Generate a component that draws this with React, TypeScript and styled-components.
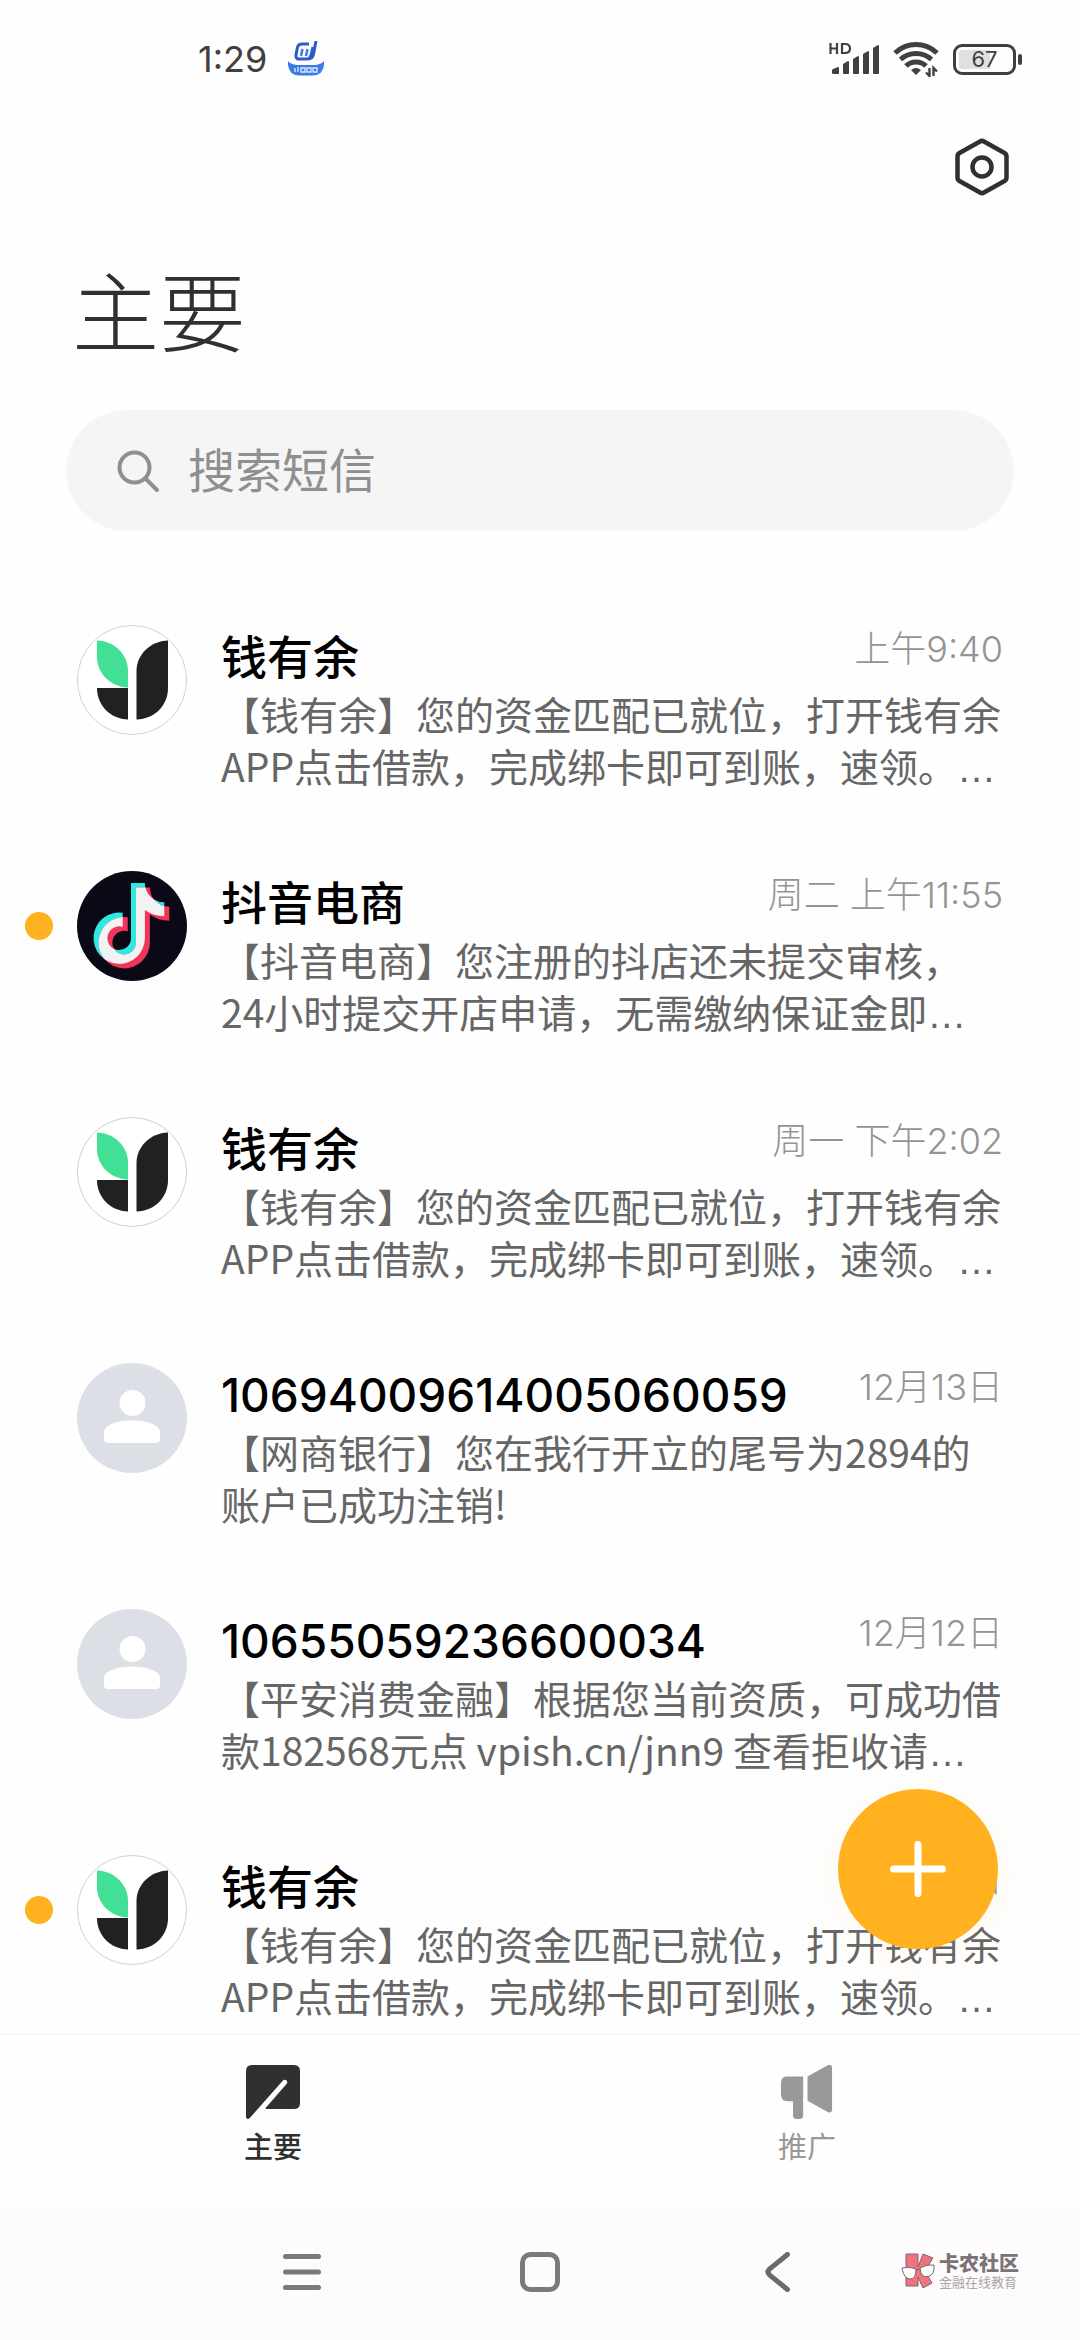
import React from "react";
import styled, { createGlobalStyle } from "styled-components";

const cjk = `"Noto Sans CJK SC", "Noto Sans", sans-serif`;
const mixed = `Inter, "Noto Sans CJK SC", sans-serif`;

const GlobalStyle = createGlobalStyle`
  *, *::before, *::after { box-sizing: border-box; }
  body {
    margin: 0;
    background: #fefefe;
    font-family: ${cjk};
    text-spacing-trim: space-all;
  }
  svg { display: block; }
`;

const Screen = styled.div`
  position: relative;
  display: flex;
  flex-direction: column;
  height: 100vh;
  overflow: hidden;
`;

const StatusBar = styled.div`
  display: flex;
  align-items: center;
  justify-content: space-between;
  height: 118px;
  padding: 0 58px 0 198px;
  color: #404040;
`;

const StatusGroup = styled.div<{ $gap: number }>`
  display: flex;
  align-items: center;
  gap: ${(p) => p.$gap}px;
`;

const Clock = styled.time`
  font: 400 36px/48px ${mixed};
`;

const Toolbar = styled.div`
  display: flex;
  justify-content: flex-end;
  height: 110px;
  padding: 18px 67px 0;
`;

const IconButton = styled.button`
  display: grid;
  place-items: center;
  width: 62px;
  height: 62px;
  padding: 0;
  border: 0;
  background: none;
  color: #303030;
`;

const PageTitle = styled.h1`
  margin: 0;
  padding: 20px 72px 0;
  color: #303030;
  font-size: 87px;
  font-weight: 300;
  line-height: 120px;
`;

const SearchBox = styled.label`
  display: flex;
  align-items: center;
  gap: 28px;
  height: 121px;
  margin: 42px 66px 70px;
  padding: 0 50px;
  border-radius: 61px;
  background: #f5f5f5;
  color: #8f8f8f;
  flex-shrink: 0;
`;

const SearchInput = styled.input`
  flex: 1;
  min-width: 0;
  padding: 0 0 6px;
  border: 0;
  outline: 0;
  background: none;
  color: #303030;
  font: 400 47px/64px ${cjk};
  &::placeholder { color: #8f8f8f; opacity: 1; }
`;

const List = styled.ul`
  flex: 1;
  min-height: 0;
  margin: 0;
  padding: 0;
  overflow: hidden;
  list-style: none;
`;

const Conversation = styled.a`
  display: flex;
  align-items: flex-start;
  height: 246px;
  padding: 24px 77px 0 25px;
  color: inherit;
  text-decoration: none;
`;

const UnreadSlot = styled.span<{ $unread: boolean }>`
  flex: none;
  width: 28px;
  height: 28px;
  margin: 41px 24px 0 0;
  border-radius: 50%;
  background: ${(p) => (p.$unread ? "#ffb11f" : "transparent")};
`;

const Avatar = styled.span`
  flex: none;
  width: 110px;
  height: 110px;
  margin-right: 34px;
`;

const Details = styled.div`
  flex: 1;
  min-width: 0;
`;

const Heading = styled.div`
  display: flex;
  justify-content: space-between;
  align-items: flex-start;
  height: 62px;
`;

const Sender = styled.h2`
  margin: 0;
  color: #000;
  font: 500 46px/64px ${mixed};
`;

const When = styled.time`
  color: #949494;
  font: 300 36px/48px ${mixed};
`;

const Preview = styled.p`
  margin: 0;
  color: #666;
  font-size: 39px;
  line-height: 52px;
  white-space: nowrap;
`;

const Line = styled.span`
  display: block;
`;

const Ellipsis = styled.span`
  font-family: "Liberation Sans", Arial, sans-serif;
`;

const Bottom = styled.div`
  position: relative;
  flex: none;
`;

const Compose = styled.button`
  position: absolute;
  right: 82px;
  bottom: calc(100% + 84px);
  display: grid;
  place-items: center;
  width: 160px;
  height: 160px;
  padding: 0;
  border: 0;
  border-radius: 50%;
  background: #ffb11f;
  box-shadow: 0 8px 60px rgba(255, 177, 31, 0.06);
`;

const Tabs = styled.nav`
  display: flex;
  height: 177px;
  padding: 0 6px;
  border-top: 2px solid #f9f9f9;
  background: #fefefe;
`;

const Tab = styled.button<{ $active?: boolean }>`
  flex: 1;
  display: flex;
  flex-direction: column;
  align-items: center;
  gap: 6px;
  padding: 30px 0 0;
  border: 0;
  background: none;
  color: ${(p) => (p.$active ? "#303030" : "#999")};
  font: ${(p) => (p.$active ? 500 : 400)} 29px/40px ${cjk};
`;

const SystemBar = styled.div`
  display: flex;
  justify-content: center;
  align-items: center;
  gap: 176px;
  height: 130px;
  padding-bottom: 6px;
  background: #fdfbfc;
`;

const Watermark = styled.div`
  position: absolute;
  right: 61px;
  bottom: 50px;
  display: flex;
  align-items: center;
  gap: 4px;
`;

const WatermarkText = styled.div`
  display: flex;
  flex-direction: column;
`;

const WatermarkName = styled.strong`
  color: #7b7376;
  font: 900 20px/22px ${cjk};
`;

const WatermarkTag = styled.span`
  color: #a9a3a5;
  font: 400 13px/16px ${cjk};
`;

const LeafLogo = () => (
  <svg width="110" height="110" viewBox="0 0 110 110">
    <circle cx="55" cy="55" r="54.5" fill="#fff" stroke="#d0d0d0" />
    <path d="M20 15.5C38 16 51 30 51 46V62.500C33 62 20 48 20 32Z" fill="#42e095" />
    <path d="M20 63H51V94.500C33 94 20 80 20 63Z" fill="#212121" />
    <path d="M91 15.500V63C91 80 78 94 59.500 94.500V46C59.500 30 73 16 91 15.500Z" fill="#212121" />
  </svg>
);

const notePath =
  "M448,209.91a210.06,210.06,0,0,1-122.77-39.25V349.38A162.55,162.55,0,1,1,185,188.31V278.2a74.62,74.62,0,1,0,52.23,71.18V0l88,0a121.18,121.18,0,0,0,1.86,22.17h0A122.18,122.18,0,0,0,381,102.39a121.43,121.43,0,0,0,67,20.14Z";

const NoteLogo = () => (
  <svg width="110" height="110" viewBox="0 0 110 110">
    <defs>
      <clipPath id="note-clip">
        <path d={notePath} transform="translate(16.500 12) scale(.158)" />
      </clipPath>
    </defs>
    <circle cx="55" cy="55" r="55" fill="#0b0915" />
    <path d={notePath} transform="translate(16.500 12) scale(.158)" fill="#2ee8e2" />
    <path d={notePath} transform="translate(21.500 16.500) scale(.158)" fill="#f0355a" />
    <g clipPath="url(#note-clip)">
      <path d={notePath} transform="translate(21.500 16.500) scale(.158)" fill="#f2f2f2" />
    </g>
  </svg>
);

const PersonIcon = () => (
  <svg width="110" height="110" viewBox="0 0 110 110">
    <circle cx="55" cy="55" r="55" fill="#dcdfe5" />
    <circle cx="55.500" cy="40" r="13" fill="#fff" />
    <path d="M27 69C27 62 40 57.500 55 57.500S83 62 83 69V76Q83 80 79 80H31Q27 80 27 76Z" fill="#fff" />
  </svg>
);

const AppBadge = () => (
  <svg width="38" height="36" viewBox="0 0 38 36">
    <path d="M22 3H15Q11 3 10.300 7L9 14Q8.500 18 12 18H20Q23 18 24 14L26 6" fill="none" stroke="#2a5bd0" strokeWidth="3" />
    <path d="M29 0L26.500 13Q25.500 18 21 18" fill="none" stroke="#2a5bd0" strokeWidth="3" />
    <path d="M15.500 8L14 15M20.500 8L19 15" stroke="#3f78ea" strokeWidth="2.500" />
    <path d="M1 20Q3 23 10 24H28Q35 23 37 20V24Q36 34 26 34.500H12Q2 34 1 24Z" fill="#3b7be6" />
    <path d="M8 27V31M11 26V31M14 27H18V31H14ZM20 27H24V31H20ZM26 27H30V31H26Z" fill="none" stroke="#dbe8ff" strokeWidth="1.400" />
  </svg>
);

const SignalIcon = () => (
  <svg width="51" height="34" viewBox="0 0 51 34" fill="currentColor">
    <path d="M1.500 1V12M8 1V12M1.500 6.500H8" stroke="currentColor" strokeWidth="2.200" fill="none" />
    <path d="M13 2H16Q21 2 21 6.500T16 11H13Z" stroke="currentColor" strokeWidth="2.200" fill="none" />
    <path d="M4 27L9 25Q10 25 10 26V31Q10 32 9 32H4Q3 32 3 31V28Z" />
    <path d="M14 22L19 19Q20 19 20 20V31Q20 32 19 32H15Q14 32 14 31Z" />
    <path d="M24 17L29 14Q30 14 30 15V31Q30 32 29 32H25Q24 32 24 31Z" />
    <path d="M34 12L39 9Q40 9 40 10V31Q40 32 39 32H35Q34 32 34 31Z" />
    <path d="M44 6L49 3Q50 3 50 4V31Q50 32 49 32H45Q44 32 44 31Z" />
  </svg>
);

const WifiIcon = () => (
  <svg width="47" height="36" viewBox="0 0 47 36">
    <g fill="none" stroke="currentColor" strokeWidth="5">
      <path d="M2 12Q11 3.500 23 3.500T44 12" />
      <path d="M7.500 18.500Q14 12.500 23 12.500T38.500 18.500" />
      <path d="M13 25Q17 21 23 21T33 25" />
    </g>
    <path d="M18 29Q23 25 28 29L23 34Z" fill="currentColor" />
    <path d="M36.500 27V35L33 31.500M40.500 35V27L44 30.500" fill="none" stroke="currentColor" strokeWidth="2.400" />
  </svg>
);

const BatteryBox = styled.div`
  display: flex;
  align-items: center;
  gap: 2px;
`;

const BatteryShell = styled.div`
  width: 63px;
  height: 31px;
  padding: 3px;
  border: 3px solid #404040;
  border-radius: 9px;
  background: linear-gradient(90deg, #e0e0e0 60%, transparent 60%) content-box;
  font: 400 22px/19px ${mixed};
  text-align: center;
`;

const BatteryTip = styled.div`
  width: 4px;
  height: 11px;
  border-radius: 2px;
  background: #404040;
`;

type Kind = "leaf" | "note" | "person";
const avatars: Record<Kind, React.FC> = { leaf: LeafLogo, note: NoteLogo, person: PersonIcon };

interface Message {
  kind: Kind;
  sender: string;
  when: string;
  lines: [string, string];
  more?: boolean;
  unread?: boolean;
}

const loanLines: [string, string] = [
  "【钱有余】您的资金匹配已就位，打开钱有余",
  "APP点击借款，完成绑卡即可到账，速领。",
];

const messages: Message[] = [
  { kind: "leaf", sender: "钱有余", when: "上午9:40", lines: loanLines, more: true },
  {
    kind: "note",
    sender: "抖音电商",
    when: "周二 上午11:55",
    lines: ["【抖音电商】您注册的抖店还未提交审核，", "24小时提交开店申请，无需缴纳保证金即"],
    more: true,
    unread: true,
  },
  { kind: "leaf", sender: "钱有余", when: "周一 下午2:02", lines: loanLines, more: true },
  {
    kind: "person",
    sender: "10694009614005060059",
    when: "12月13日",
    lines: ["【网商银行】您在我行开立的尾号为2894的", "账户已成功注销!"],
  },
  {
    kind: "person",
    sender: "10655059236600034",
    when: "12月12日",
    lines: ["【平安消费金融】根据您当前资质，可成功借", "款182568元点 vpish.cn/jnn9 查看拒收请"],
    more: true,
  },
  { kind: "leaf", sender: "钱有余", when: "12月12日", lines: loanLines, more: true, unread: true },
];

const MessageRow = ({ kind, sender, when, lines, more, unread }: Message) => {
  const Picture = avatars[kind];
  return (
    <li>
      <Conversation href="#">
        <UnreadSlot $unread={!!unread} />
        <Avatar>
          <Picture />
        </Avatar>
        <Details>
          <Heading>
            <Sender>{sender}</Sender>
            <When>{when}</When>
          </Heading>
          <Preview>
            <Line>{lines[0]}</Line>
            <Line>
              {lines[1]}
              {more && <Ellipsis>…</Ellipsis>}
            </Line>
          </Preview>
        </Details>
      </Conversation>
    </li>
  );
};

export default function App() {
  return (
    <Screen>
      <GlobalStyle />
      <StatusBar>
        <StatusGroup $gap={20}>
          <Clock>1:29</Clock>
          <AppBadge />
        </StatusGroup>
        <StatusGroup $gap={13}>
          <SignalIcon />
          <WifiIcon />
          <BatteryBox>
            <BatteryShell>67</BatteryShell>
            <BatteryTip />
          </BatteryBox>
        </StatusGroup>
      </StatusBar>
      <Toolbar>
        <IconButton aria-label="设置">
          <svg width="54" height="60" viewBox="0 0 54 60" fill="none" stroke="currentColor" strokeWidth="4.500" strokeLinejoin="round">
            <path d="M25 4.500Q27 3.300 29 4.500L49.500 16Q51.500 17.200 51.500 19.500V40.500Q51.500 42.800 49.500 44L29 55.500Q27 56.700 25 55.500L4.500 44Q2.500 42.800 2.500 40.500V19.500Q2.500 17.200 4.500 16Z" />
            <circle cx="27" cy="30" r="9.500" />
          </svg>
        </IconButton>
      </Toolbar>
      <PageTitle>主要</PageTitle>
      <SearchBox>
        <svg width="44" height="44" viewBox="0 0 44 44" fill="none" stroke="currentColor" strokeWidth="4" strokeLinecap="round">
          <circle cx="18.500" cy="18.500" r="15" />
          <path d="M29.500 29.500L41 41" />
        </svg>
        <SearchInput type="text" placeholder="搜索短信" aria-label="搜索短信" />
      </SearchBox>
      <List>
        {messages.map((m, i) => (
          <MessageRow key={i} {...m} />
        ))}
      </List>
      <Bottom>
        <Compose aria-label="新建短信">
          <svg width="56" height="56" viewBox="0 0 56 56" stroke="#fff" strokeWidth="7" strokeLinecap="round">
            <path d="M28 3.500V52.500M3.500 28H52.500" />
          </svg>
        </Compose>
        <Tabs>
          <Tab $active>
            <svg width="54" height="54" viewBox="0 0 54 54">
              <path d="M6 0H48Q54 0 54 6V38Q54 44 48 44H20.500Q19 44 20 42.500L40.500 19Q42 17 40.500 15.500Q38.500 14 36.500 16L4 52.800Q2.800 54 1.500 54Q0 53.500 0 51.500V6Q0 0 6 0Z" fill="currentColor" />
            </svg>
            主要
          </Tab>
          <Tab>
            <svg width="54" height="54" viewBox="0 0 54 56" fill="currentColor">
              <path d="M6 12H23V52Q23 56 19 56H16.500Q12.500 56 12.500 52V37.500H7Q0 37.500 0 30.500V19Q0 12 6 12Z" />
              <path d="M27.500 12L49 0Q53 -1 53 3V46Q53 50 49 49L27.500 37Z" />
            </svg>
            推广
          </Tab>
        </Tabs>
        <SystemBar>
          <IconButton aria-label="最近任务">
            <svg width="40" height="40" viewBox="0 0 40 40" stroke="#7b797a" strokeWidth="5" strokeLinecap="round">
              <path d="M3.500 4.500H36.500M3.500 20H36.500M3.500 35.500H36.500" />
            </svg>
          </IconButton>
          <IconButton aria-label="主屏幕">
            <svg width="40" height="40" viewBox="0 0 40 40" fill="none" stroke="#7b797a" strokeWidth="5">
              <rect x="2.500" y="2.500" width="35" height="35" rx="8" />
            </svg>
          </IconButton>
          <IconButton aria-label="返回">
            <svg width="26" height="42" viewBox="0 0 26 42" fill="none" stroke="#6b696a" strokeWidth="5" strokeLinecap="round">
              <path d="M22.500 3.500L4.500 18Q1.500 21 4.500 24L22.500 38.500" />
            </svg>
          </IconButton>
        </SystemBar>
        <Watermark>
          <svg width="34" height="36" viewBox="0 0 34 36" stroke="#77696d">
            <path d="M5 1H17V14L22 1L32 5L24 18L31 30L22 35L17 24V33H5Z" fill="#f3727f" />
            <path d="M1 15Q8 13 15 16Q15 26 9 26T1 15Z" fill="#fff" />
            <path d="M19 15Q26 11 33 12Q34 22 27 23.500T19 15ZM15 17L19 16" fill="#fff" />
          </svg>
          <WatermarkText>
            <WatermarkName>卡农社区</WatermarkName>
            <WatermarkTag>金融在线教育</WatermarkTag>
          </WatermarkText>
        </Watermark>
      </Bottom>
    </Screen>
  );
}
